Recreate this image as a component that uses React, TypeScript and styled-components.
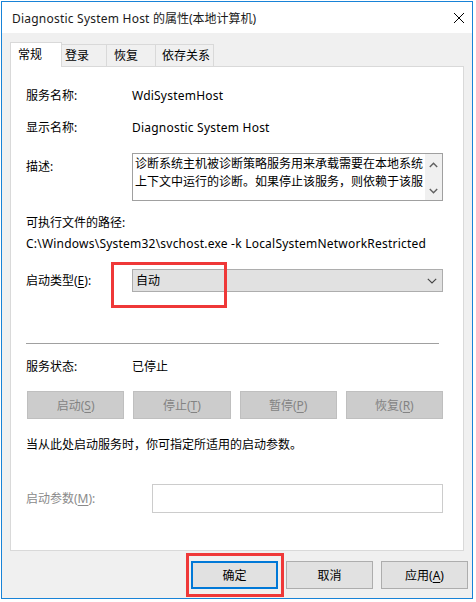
import React from 'react';
import styled, { createGlobalStyle } from 'styled-components';

const Global = createGlobalStyle`
  html, body { margin: 0; padding: 0; background: #ffffff; }
  body {
    font-family: "Noto Sans", "Noto Sans CJK SC", sans-serif;
    font-size: 12px;
    color: #000;
  }
  #root { width: 476px; height: 602px; }
`;

const Window = styled.div`
  box-sizing: border-box;
  margin: 1px 0 0 1px;
  width: 472px;
  height: 598px;
  border: 1px solid #1883d7;
  background: #f0f0f0;
  display: flex;
  flex-direction: column;
`;

const TitleBar = styled.div`
  height: 31px;
  flex: none;
  background: #ffffff;
  display: flex;
  align-items: center;
  justify-content: space-between;
  padding: 0 7px 0 10px;
  font-size: 12px;
  color: #1a1a1a;
`;

const CloseIcon = styled.svg`
  width: 12px;
  height: 12px;
  margin-top: 1px;
`;

const Latin = styled.span`
  letter-spacing: 0.22px;
`;

const TabArea = styled.div`
  padding: 9px 8px 0 8px;
  display: flex;
  flex-direction: column;
`;

const TabStrip = styled.div`
  display: flex;
  align-items: flex-end;
  height: 24px;
`;

const Tab = styled.div<{ $w: number; $pl: number; $active?: boolean; $first?: boolean }>`
  box-sizing: border-box;
  width: ${p => p.$w}px;
  padding-left: ${p => p.$pl}px;
  margin-left: ${p => (p.$first ? 0 : -1)}px;
  height: ${p => (p.$active ? 25 : 22)}px;
  margin-bottom: ${p => (p.$active ? -1 : 0)}px;
  background: ${p => (p.$active ? '#ffffff' : '#f0f0f0')};
  border: 1px solid #d9d9d9;
  border-bottom: none;
  display: flex;
  align-items: center;
  line-height: 18px;
  position: relative;
  z-index: ${p => (p.$active ? 2 : 1)};
`;

const Panel = styled.div`
  box-sizing: border-box;
  height: 485px;
  background: #ffffff;
  border: 1px solid #d9d9d9;
  padding: 19px 20px 0 15px;
  display: flex;
  flex-direction: column;
`;

const Row = styled.div<{ $mt?: number; $h?: number; $align?: string }>`
  display: grid;
  grid-template-columns: 106px 1fr;
  align-items: ${p => p.$align || 'center'};
  margin-top: ${p => p.$mt || 0}px;
  min-height: ${p => p.$h || 20}px;
  line-height: 20px;
  position: relative;
`;

const Line = styled.div<{ $mt?: number; $grey?: boolean }>`
  margin-top: ${p => p.$mt || 0}px;
  line-height: 20px;
  height: 20px;
  white-space: nowrap;
  color: ${p => (p.$grey ? '#8a8a8a' : '#000')};
`;

const Label = styled.div<{ $grey?: boolean; $mt?: number }>`
  color: ${p => (p.$grey ? '#8a8a8a' : '#000')};
  margin-top: ${p => p.$mt || 0}px;
  white-space: nowrap;
`;

const DescBox = styled.div`
  box-sizing: border-box;
  height: 48px;
  border: 1px solid #a0a0a0;
  display: flex;
`;

const DescText = styled.div`
  flex: 1;
  padding: 1px 0 0 2px;
  line-height: 18px;
  overflow: hidden;
  white-space: nowrap;
`;

const ScrollBar = styled.div`
  width: 17px;
  background: #f0f0f0;
  display: flex;
  flex-direction: column;
  justify-content: space-between;
  align-items: center;
  padding: 8px 0 6px;
`;

const Combo = styled.div`
  box-sizing: border-box;
  height: 23px;
  background: #e1e1e1;
  border: 1px solid #adadad;
  display: flex;
  align-items: center;
  justify-content: space-between;
  padding: 0 5px 0 3px;
  position: relative;
`;

const Highlight = styled.div<{ $l: number; $t: number; $w: number; $h: number }>`
  position: absolute;
  left: ${p => p.$l}px;
  top: ${p => p.$t}px;
  width: ${p => p.$w}px;
  height: ${p => p.$h}px;
  box-sizing: border-box;
  border: 3px solid #ef3838;
  pointer-events: none;
`;

const Separator = styled.div`
  margin-top: 51px;
  margin-right: 4px;
  height: 1px;
  background: #a0a0a0;
`;

const ActionGrid = styled.div`
  display: grid;
  grid-template-columns: repeat(4, 1fr);
  column-gap: 9px;
  margin: 14px 0 0 1px;
`;

const DisabledButton = styled.div`
  box-sizing: border-box;
  height: 28px;
  background: #cccccc;
  border: 1px solid #bfbfbf;
  color: #838383;
  display: flex;
  align-items: center;
  justify-content: center;
`;

const ParamInput = styled.div`
  box-sizing: border-box;
  height: 29px;
  margin-left: 20px;
  border: 1px solid #cccccc;
  background: #ffffff;
`;

const Footer = styled.div`
  display: flex;
  justify-content: flex-end;
  gap: 8px;
  margin-top: 10px;
  padding-right: 4px;
`;

const FooterButton = styled.div<{ $default?: boolean }>`
  box-sizing: border-box;
  width: 87px;
  height: 28px;
  background: #e1e1e1;
  border: ${p => (p.$default ? '2px solid #0078d7' : '1px solid #adadad')};
  display: flex;
  align-items: center;
  justify-content: center;
  position: relative;
`;

const U = styled.span`
  text-decoration: underline;
  text-underline-offset: 2px;
`;

const Chevron = ({ dir }: { dir: 'up' | 'down' }) => (
  <svg width="9" height="6" viewBox="0 0 9 6">
    <path
      d={dir === 'up' ? 'M0.8 5 L4.5 1.3 L8.2 5' : 'M0.8 1 L4.5 4.7 L8.2 1'}
      fill="none"
      stroke="#606060"
      strokeWidth="1.4"
    />
  </svg>
);

export default function App() {
  return (
    <>
      <Global />
      <Window>
        <TitleBar>
          <span>
            <Latin>Diagnostic System Host </Latin>的属性(本地计算机)
          </span>
          <CloseIcon viewBox="0 0 12 12">
            <path d="M1 1 L11 11 M11 1 L1 11" stroke="#000" strokeWidth="1" fill="none" />
          </CloseIcon>
        </TitleBar>
        <TabArea>
          <TabStrip>
            <Tab $w={52} $pl={7} $active $first>常规</Tab>
            <Tab $w={46} $pl={3}>登录</Tab>
            <Tab $w={50} $pl={7}>恢复</Tab>
            <Tab $w={59} $pl={6}>依存关系</Tab>
          </TabStrip>
          <Panel>
            <Row>
              <Label>服务名称:</Label>
              <Latin>WdiSystemHost</Latin>
            </Row>
            <Row $mt={12}>
              <Label>显示名称:</Label>
              <Latin>Diagnostic System Host</Latin>
            </Row>
            <Row $mt={15} $h={48} $align="start">
              <Label $mt={4}>描述:</Label>
              <DescBox>
                <DescText>
                  诊断系统主机被诊断策略服务用来承载需要在本地系统
                  <br />
                  上下文中运行的诊断。如果停止该服务，则依赖于该服
                </DescText>
                <ScrollBar>
                  <Chevron dir="up" />
                  <Chevron dir="down" />
                </ScrollBar>
              </DescBox>
            </Row>
            <Line $mt={12}>可执行文件的路径:</Line>
            <Line $mt={1}>
              <Latin>C:\Windows\System32\svchost.exe -k LocalSystemNetworkRestricted</Latin>
            </Line>
            <Row $mt={15} $h={23}>
              <Label>
                启动类型(<U>E</U>):
              </Label>
              <Combo>
                <span>自动</span>
                <svg width="10" height="6" viewBox="0 0 10 6">
                  <path d="M0.8 0.8 L5 5 L9.2 0.8" fill="none" stroke="#444" strokeWidth="1.1" />
                </svg>
                <Highlight $l={-22} $t={-8} $w={116} $h={46} />
              </Combo>
            </Row>
            <Separator />
            <Row $mt={13}>
              <Label>服务状态:</Label>
              <div>已停止</div>
            </Row>
            <ActionGrid>
              <DisabledButton>
                启动(<U>S</U>)
              </DisabledButton>
              <DisabledButton>
                停止(<U>T</U>)
              </DisabledButton>
              <DisabledButton>
                暂停(<U>P</U>)
              </DisabledButton>
              <DisabledButton>
                恢复(<U>R</U>)
              </DisabledButton>
            </ActionGrid>
            <Line $mt={16}>当从此处启动服务时，你可指定所适用的启动参数。</Line>
            <Row $mt={29} $h={29}>
              <Label $grey>
                启动参数(<U>M</U>):
              </Label>
              <ParamInput />
            </Row>
          </Panel>
        </TabArea>
        <Footer>
          <FooterButton $default>
            确定
            <Highlight $l={-7} $t={-10} $w={98} $h={44} />
          </FooterButton>
          <FooterButton>取消</FooterButton>
          <FooterButton>
            应用(<U>A</U>)
          </FooterButton>
        </Footer>
      </Window>
    </>
  );
}
